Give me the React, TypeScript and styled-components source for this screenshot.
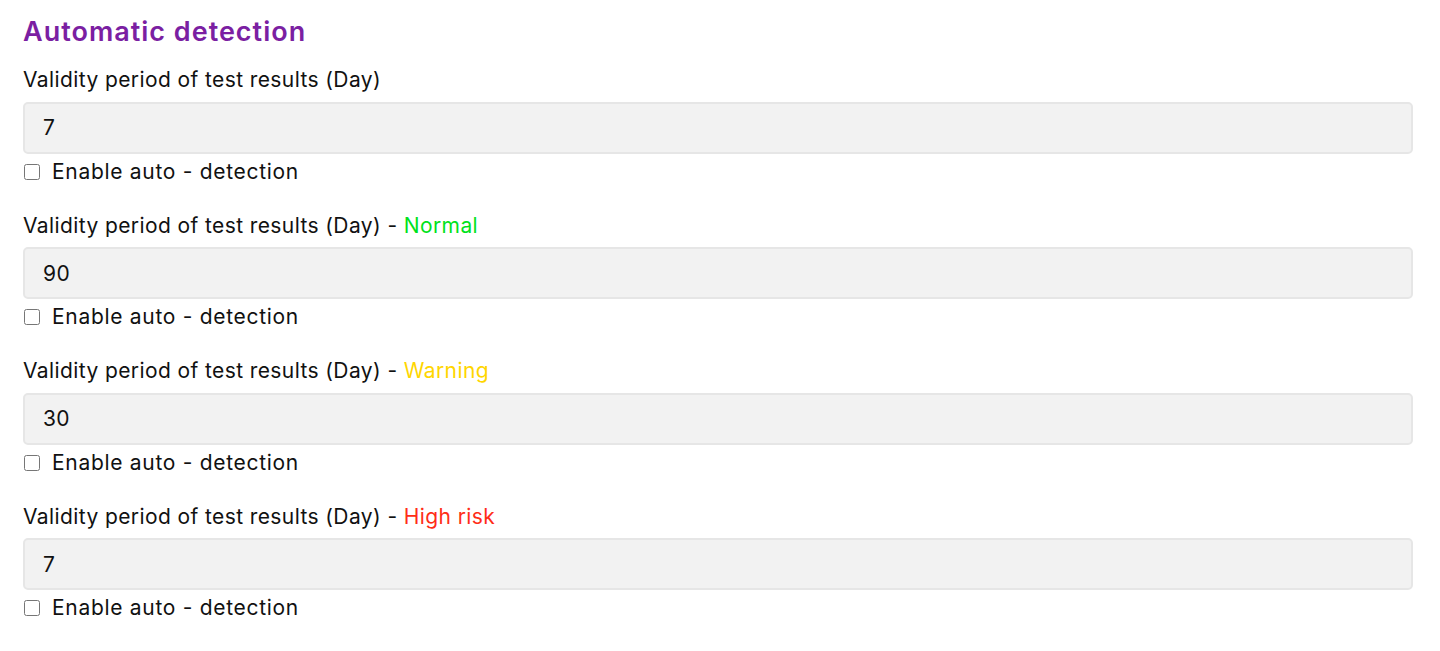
import React from 'react'
import styled, { createGlobalStyle } from 'styled-components'

const fields = [
  { value: '7', level: '', color: '' },
  { value: '90', level: 'Normal', color: '#00e21c' },
  { value: '30', level: 'Warning', color: '#ffd600' },
  { value: '7', level: 'High risk', color: '#ff2d17' },
]

const App = () => {
  return (
    <>
      <GlobalStyle />
      <Container>
        <Heading>Automatic detection</Heading>
        {fields.map((f, i) => (
          <Field key={i}>
            <Label>
              Validity period of test results (Day)
              {f.level && (
                <>
                  {' '}- <Level color={f.color}>{f.level}</Level>
                </>
              )}
            </Label>
            <Input type="text" defaultValue={f.value} />
            <CheckRow>
              <Check type="checkbox" />
              Enable auto - detection
            </CheckRow>
          </Field>
        ))}
      </Container>
    </>
  )
}

export default App

const GlobalStyle = createGlobalStyle`
body {
  margin: 0;
  background: #ffffff;
  font-family: Inter, "Noto Sans", sans-serif;
  color: #111111;
}
`
const Container = styled.div`
padding: 15px 27px 0 23px;
display: flex;
flex-direction: column;
`
const Heading = styled.h2`
margin: 0 0 16px;
font-size: 27px;
line-height: 34px;
letter-spacing: 1px;
font-weight: 600;
color: #7b1fa2;
`
const Field = styled.div`
display: flex;
flex-direction: column;
margin-bottom: 24px;
`
const Label = styled.div`
font-size: 21px;
line-height: 30px;
letter-spacing: 0.4px;
font-weight: 400;
`
const Level = styled.span<{ color: string }>`
color: ${(p) => p.color};
`
const Input = styled.input`
margin-top: 6.5px;
box-sizing: border-box;
height: 52px;
width: 100%;
padding: 0 18px;
border: 2px solid #e6e6e6;
border-radius: 5px;
background: #f2f2f2;
font-family: inherit;
font-size: 21px;
letter-spacing: 0.4px;
color: #111111;
outline: none;
`
const CheckRow = styled.label`
margin-top: 3px;
display: flex;
align-items: center;
font-size: 21px;
line-height: 30px;
letter-spacing: 0.7px;
`
const Check = styled.input`
width: 16px;
height: 16px;
margin: 0 12px 0 1px;
`
